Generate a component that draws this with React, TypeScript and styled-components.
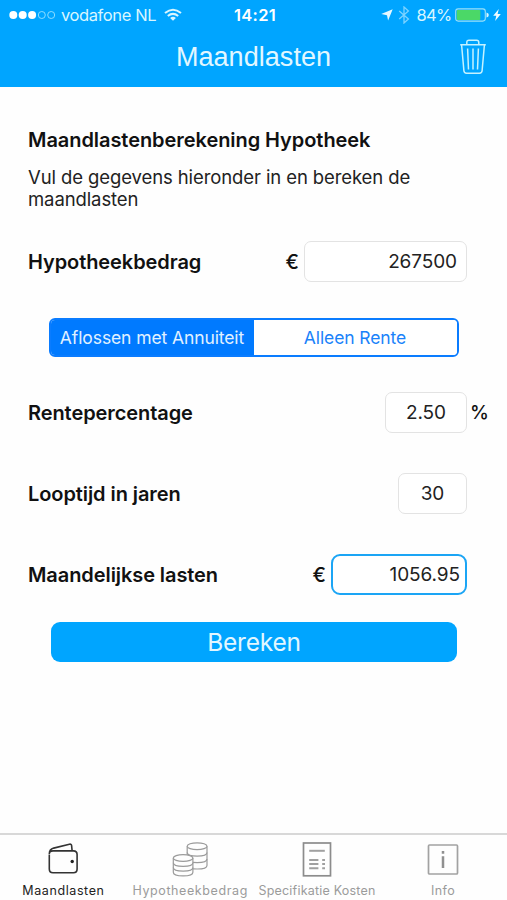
import { useState } from "react";
import styled, { createGlobalStyle } from "styled-components";

const GlobalStyle = createGlobalStyle`
  * {
    box-sizing: border-box;
  }

  body {
    margin: 0;
    background: #fefefe;
    font-family: Inter, "Liberation Sans", sans-serif;
  }

  button, input {
    font-family: inherit;
    margin: 0;
  }
`;

const Screen = styled.div`
  width: 507px;
  height: 900px;
  display: flex;
  flex-direction: column;
  background: #fefefe;
  color: #111;
  overflow: hidden;
`;

const Header = styled.header`
  height: 87px;
  background: #00a5ff;
  color: #fff;
`;

const StatusBar = styled.div`
  height: 30px;
  padding: 0 6px 0 9px;
  display: grid;
  grid-template-columns: 1fr auto 1fr;
  align-items: center;
  line-height: 30px;
`;

const StatusGroup = styled.div<{ $end?: boolean }>`
  display: flex;
  align-items: center;
  justify-content: ${p => (p.$end ? "flex-end" : "flex-start")};
  color: #d9f6ff;
`;

const Carrier = styled.span`
  margin: 0 8px 0 5px;
  font-size: 16.5px;
  letter-spacing: -0.4px;
`;

const Clock = styled.span`
  font-size: 16.5px;
  font-weight: 600;
  letter-spacing: 0.3px;
`;

const Percent = styled.span`
  margin: 0 3px 0 7px;
  font-size: 16.5px;
  letter-spacing: -0.7px;
`;

const NavBar = styled.div`
  height: 57px;
  padding: 0 20px 4px;
  display: grid;
  grid-template-columns: 28px 1fr 28px;
  align-items: center;
`;

const NavTitle = styled.h1`
  margin: 0;
  padding-top: 1px;
  text-align: center;
  font-family: "Liberation Sans", Arial, sans-serif;
  font-size: 27px;
  font-weight: 400;
  letter-spacing: 0.05px;
  color: #e2f7ff;
`;

const IconButton = styled.button`
  display: flex;
  padding: 0;
  border: none;
  background: none;
  cursor: pointer;
`;

const Content = styled.main`
  flex: 1;
  padding: 41px 40px 0 28px;
`;

const Heading = styled.h2`
  margin: 0 0 14px;
  font-size: 20px;
  font-weight: 600;
  letter-spacing: -0.06px;
  line-height: 24px;
  white-space: nowrap;
`;

const Intro = styled.p`
  width: 400px;
  margin: 0 0 31px;
  font-size: 18.5px;
  letter-spacing: -0.1px;
  line-height: 22px;
  color: #222;
`;

const Row = styled.div<{ $gap: number }>`
  height: 41px;
  margin-bottom: ${p => p.$gap}px;
  display: flex;
  align-items: center;
`;

const Label = styled.label`
  flex: 1;
  font-size: 20px;
  font-weight: 600;
  letter-spacing: -0.08px;
  white-space: nowrap;
`;

const Unit = styled.span`
  margin-right: 5px;
  font-size: 20px;
  font-weight: 500;
`;

const Suffix = styled.span`
  width: 18px;
  margin: 0 -21px 0 3px;
  font-size: 19px;
  font-weight: 500;
`;

const Field = styled.input<{ $width: number; $align?: string; $result?: boolean }>`
  width: ${p => p.$width}px;
  height: 41px;
  padding: 0 ${p => (p.$result ? 5 : 9)}px 0 0;
  ${p => p.$align === "center" && "padding: 0;"}
  border: ${p => (p.$result ? "2px solid #1ba5f5" : "1.5px solid #e3e3e3")};
  border-radius: ${p => (p.$result ? 9 : 7)}px;
  outline: none;
  background: #fff;
  color: #222;
  font-size: 19px;
  letter-spacing: -0.1px;
  text-align: ${p => p.$align ?? "right"};
`;

const Segments = styled.div`
  width: 410px;
  height: 39px;
  margin: 0 0 35px 21px;
  display: flex;
  border: 2px solid #0a7cff;
  border-radius: 6px;
  overflow: hidden;
`;

const Segment = styled.button<{ $active: boolean }>`
  flex: 1;
  padding: 0 1px 0 0;
  border: none;
  background: ${p => (p.$active ? "#007aff" : "#fff")};
  color: ${p => (p.$active ? "#e0f1ff" : "#1a82fa")};
  font-size: 17.5px;
  letter-spacing: -0.1px;
  white-space: nowrap;
  cursor: pointer;
`;

const Submit = styled.button`
  display: block;
  width: 406px;
  height: 40px;
  margin-left: 23px;
  padding: 0;
  border: none;
  border-radius: 9px;
  background: #00a5ff;
  color: #e2f7ff;
  font-size: 24.5px;
  font-weight: 400;
  letter-spacing: -0.2px;
  cursor: pointer;
`;

const TabBar = styled.nav`
  height: 67px;
  padding-top: 4px;
  display: grid;
  grid-template-columns: repeat(3, 126.8px) 125.5px;
  border-top: 2px solid #d8d8d8;
`;

const Tab = styled.button<{ $active: boolean; $spacing: number }>`
  padding: 0;
  display: flex;
  flex-direction: column;
  align-items: center;
  border: none;
  background: none;
  color: ${p => (p.$active ? "#222" : "#9b9b9b")};
  font-size: 12.5px;
  letter-spacing: ${p => p.$spacing}px;
  line-height: 16px;
  white-space: nowrap;
  cursor: pointer;

  svg {
    margin-bottom: 4px;
  }
`;

const SignalDots = () => (
  <svg width="47" height="10" viewBox="0 0 47 10">
    {[4.3, 13.7, 23.1].map(x => <circle key={x} cx={x} cy="5" r="4" fill="#fff" />)}
    {[32.8, 42.2].map(x => <circle key={x} cx={x} cy="5" r="3.5" fill="none" stroke="#8eddff" strokeWidth="1" />)}
  </svg>
);

const WifiIcon = () => (
  <svg width="18" height="14" viewBox="0 0 18 14" fill="none" stroke="#d9f6ff" strokeWidth="2">
    <path d="M1 5.1Q9-1.7 17 5.1M3.8 8Q9 3.8 14.2 8" />
    <path d="M9 12.8 6.1 9.9Q9 7.6 11.9 9.9Z" fill="#d9f6ff" stroke="none" />
  </svg>
);

const LocationIcon = () => (
  <svg width="12" height="12" viewBox="0 0 12 12">
    <path d="M11.7.3 7.1 11.6 6 6.2.2 5.1Z" fill="#e8f8ff" />
  </svg>
);

const BluetoothIcon = () => (
  <svg width="12" height="18" viewBox="0 0 12 18" fill="none" stroke="#7dd3ff" strokeWidth="1.3">
    <path d="M1.2 5 10.4 13 6 17V1l4.4 4-9.2 8" />
  </svg>
);

const BatteryIcon = () => (
  <svg width="34" height="14" viewBox="0 0 34 14">
    <rect x=".7" y=".9" width="29.6" height="12.2" rx="2.5" fill="none" stroke="#9be0f7" strokeWidth="1.1" />
    <rect x="1.7" y="2" width="23.6" height="10" rx="1" fill="#4bd867" />
    <path d="M31.5 4.5Q33.8 5 33.8 7T31.5 9.5Z" fill="#d9f6ff" />
  </svg>
);

const BoltIcon = () => (
  <svg width="8" height="12" viewBox="0 0 8 12">
    <path d="M5.8 0 .2 6.8h3.1L2.1 12 7.8 4.9H4.6Z" fill="#f3fcff" />
  </svg>
);

const TrashIcon = () => (
  <svg width="28" height="36" viewBox="0 0 28 36" fill="none" stroke="#c5f2ff" strokeWidth="1.5">
    <path d="M1.2 5.7h25.6M7.8 5.5V3.4q0-2.2 2.2-2.2h7.6q2.2 0 2.2 2.2v2.1" />
    <path d="M2.6 6 4.9 31.8q.2 2.4 2.6 2.4h13q2.4 0 2.6-2.4L25.4 6" />
    <path d="m8.6 9.5.9 21M14 9.5v21m5.4-21-.9 21" />
  </svg>
);

const WalletIcon = () => (
  <svg width="32" height="40" viewBox="0 0 32 40" fill="none" stroke="#333" strokeWidth="1.6">
    <path d="M2.3 15.5V30q0 3.7 3.7 3.7h20.4q3.7 0 3.7-3.7V15.6q0-3.7-3.7-3.7H6q-3.7 0-3.7 3.2 0-4.8 4.4-6L22.4 5.2q2-.5 2.2 1.4l.5 5" />
    <circle cx="25.2" cy="22.5" r="1.7" fill="#222" stroke="none" />
  </svg>
);

const CoinsIcon = () => (
  <svg width="36" height="40" viewBox="0 0 36 40" fill="#fefefe" stroke="#9b9b9b" strokeWidth="1.2">
    <path d="M15.2 7.2v19.2q0 3.6 9.9 3.6t9.9-3.6V7.2" />
    <path d="M15.2 13.5q0 3.6 9.9 3.6t9.9-3.6M15.2 20q0 3.6 9.9 3.6T35 20" fill="none" />
    <ellipse cx="25.1" cy="7.2" rx="9.9" ry="3.4" />
    <path d="M1.3 19v14.2q0 3.7 9.8 3.7t9.8-3.7V19" />
    <path d="M1.3 23.8q0 3.6 9.8 3.6t9.8-3.6M1.3 28.5q0 3.6 9.8 3.6t9.8-3.6" fill="none" />
    <ellipse cx="11.1" cy="19" rx="9.8" ry="3.4" />
  </svg>
);

const DocumentIcon = () => (
  <svg width="30" height="40" viewBox="0 0 30 40" fill="none" stroke="#a0a0a0" strokeWidth="1.7">
    <rect x="1.5" y="4" width="27" height="32.8" stroke="#8c8c8c" />
    <path d="M7.2 11.8h15.6" strokeWidth="2" />
    <path d="M7.2 21h9.2m3.8 0H23M7.2 25.1h9.2m3.8 0H23M7.2 29.2h9.2m3.8 0H23" strokeWidth="2" />
  </svg>
);

const InfoIcon = () => (
  <svg width="32" height="40" viewBox="0 0 32 40" fill="none" stroke="#a2a2a2" strokeWidth="1.7">
    <rect x="1.5" y="6" width="29" height="29" rx="1" />
    <path d="M16 17.2v11.8m0-17v2.8" stroke="#909090" strokeWidth="2.5" />
  </svg>
);

const tabs = [
  { id: "maandlasten", label: "Maandlasten", spacing: 0.6, Icon: WalletIcon },
  { id: "hypotheek", label: "Hypotheekbedrag", spacing: 0.6, Icon: CoinsIcon },
  { id: "kosten", label: "Specifikatie Kosten", spacing: 0.2, Icon: DocumentIcon },
  { id: "info", label: "Info", spacing: 0.4, Icon: InfoIcon },
];

const modes = ["Aflossen met Annuiteit", "Alleen Rente"];

export default function App() {
  const [mode, setMode] = useState(0);
  const [tab, setTab] = useState("maandlasten");
  const [amount, setAmount] = useState("267500");
  const [rate, setRate] = useState("2.50");
  const [years, setYears] = useState("30");
  const [monthly, setMonthly] = useState("1056.95");

  const calculate = () => {
    const r = Number(rate) / 1200;
    const n = Number(years) * 12;
    const interest = Number(amount) * r;
    const result = mode === 0 ? interest / (1 - Math.pow(1 + r, -n)) : interest;
    setMonthly(Number.isFinite(result) ? result.toFixed(2) : "");
  };

  const clear = () => {
    setAmount("");
    setRate("");
    setYears("");
    setMonthly("");
  };

  return (
    <Screen>
      <GlobalStyle />
      <Header>
        <StatusBar>
          <StatusGroup>
            <SignalDots />
            <Carrier>vodafone NL</Carrier>
            <WifiIcon />
          </StatusGroup>
          <Clock>14:21</Clock>
          <StatusGroup $end>
            <LocationIcon />
            <span>&nbsp;</span>
            <BluetoothIcon />
            <Percent>84%</Percent>
            <BatteryIcon />
            <span>&nbsp;</span>
            <BoltIcon />
          </StatusGroup>
        </StatusBar>
        <NavBar>
          <span />
          <NavTitle>Maandlasten</NavTitle>
          <IconButton onClick={clear}><TrashIcon /></IconButton>
        </NavBar>
      </Header>

      <Content>
        <Heading>Maandlastenberekening Hypotheek</Heading>
        <Intro>Vul de gegevens hieronder in en bereken de maandlasten</Intro>
        <Row $gap={36}>
          <Label>Hypotheekbedrag</Label>
          <Unit>€</Unit>
          <Field $width={163} value={amount} onChange={e => setAmount(e.target.value)} />
        </Row>
        <Segments>
          {modes.map((name, i) => (
            <Segment key={name} $active={mode === i} onClick={() => setMode(i)}>{name}</Segment>
          ))}
        </Segments>
        <Row $gap={40}>
          <Label>Rentepercentage</Label>
          <Field $width={82} $align="center" value={rate} onChange={e => setRate(e.target.value)} />
          <Suffix>%</Suffix>
        </Row>
        <Row $gap={40}>
          <Label>Looptijd in jaren</Label>
          <Field $width={69} $align="center" value={years} onChange={e => setYears(e.target.value)} />
        </Row>
        <Row $gap={27}>
          <Label>Maandelijkse lasten</Label>
          <Unit>€</Unit>
          <Field $width={136} $result readOnly value={monthly} />
        </Row>
        <Submit onClick={calculate}>Bereken</Submit>
      </Content>

      <TabBar>
        {tabs.map(({ id, label, spacing, Icon }) => (
          <Tab key={id} $active={tab === id} $spacing={spacing} onClick={() => setTab(id)}>
            <Icon />
            {label}
          </Tab>
        ))}
      </TabBar>
    </Screen>
  );
}
